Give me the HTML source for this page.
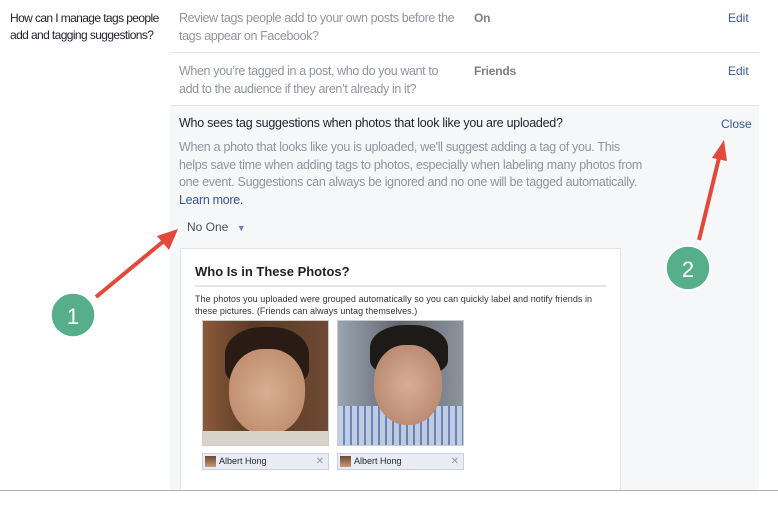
<!DOCTYPE html>
<html><head><meta charset="utf-8"><style>
*{margin:0;padding:0;box-sizing:border-box}
body{width:778px;height:510px;background:#fff;font-family:"Liberation Sans",Helvetica,Arial,sans-serif;position:relative;overflow:hidden;color:#1d2129}
.abs{position:absolute;white-space:nowrap}
.q{left:10px;top:10px;font-size:12px;line-height:17px;color:#1d2129;letter-spacing:-0.6px}
.g{color:#90949c;font-size:12.5px;line-height:18px;letter-spacing:-0.38px}
.val{color:#7f7f7f;font-weight:bold;font-size:12px;letter-spacing:-0.2px}
.lnk{color:#365899;font-size:12px}
.panel{left:170px;top:105px;width:589px;height:385px;background:#f6f7f9;border-top:1px solid #e5e5e5}
.box{left:180px;top:248px;width:441px;height:242px;background:#fff;border:1px solid #e3e3e3;border-bottom:none}
.ph{position:absolute;width:127px;height:126px;overflow:hidden;border:1px solid #ccc}
.tag{position:absolute;width:127px;height:17px;background:#e9ecf5;border:1px solid #c7cfe3;font-size:9px;line-height:15px;padding-left:16px;color:#1d2129}
.tag i{position:absolute;left:2px;top:2px;width:11px;height:11px;background:linear-gradient(#6b4a30,#c99a7a)}
.tag b{position:absolute;right:4px;top:0;color:#999;font-weight:normal;font-size:10px}
</style></head><body>
<div class="abs q">How can I manage tags people<br>add and tagging suggestions?</div>

<div class="abs g" style="top:9px;left:179px">Review tags people add to your own posts before the<br>tags appear on Facebook?</div>
<div class="abs val" style="left:474px;top:11px">On</div>
<div class="abs lnk" style="left:728px;top:11px">Edit</div>
<div class="abs" style="left:170px;top:52px;width:589px;height:1px;background:#e5e5e5"></div>
<div class="abs g" style="top:62px;left:179px">When you’re tagged in a post, who do you want to<br>add to the audience if they aren’t already in it?</div>
<div class="abs val" style="left:474px;top:64px">Friends</div>
<div class="abs lnk" style="left:728px;top:64px">Edit</div>

<div class="abs panel"></div>
<div class="abs" style="left:179px;top:116px;font-size:12.5px;color:#1d2129;letter-spacing:-0.25px">Who sees tag suggestions when photos that look like you are uploaded?</div>
<div class="abs lnk" style="left:721px;top:117px">Close</div>
<div class="abs g" style="left:179px;top:139px;line-height:17.5px;letter-spacing:-0.3px">When a photo that looks like you is uploaded, we'll suggest adding a tag of you. This<br>helps save time when adding tags to photos, especially when labeling many photos from<br>one event. Suggestions can always be ignored and no one will be tagged automatically.<br><span style="color:#365899">Learn more.</span></div>
<div class="abs" style="left:187px;top:220px;font-size:12px;color:#4b4f56">No One <span style="color:#6d84b4;font-size:9px;margin-left:5px">▼</span></div>

<div class="abs box">
 <div style="position:absolute;left:14px;top:15px;font-size:13px;font-weight:bold;color:#1d2129">Who Is in These Photos?</div>
 <div style="position:absolute;left:14px;top:36px;width:411px;height:2px;background:#e5e5e5"></div>
 <div style="position:absolute;left:14px;top:44px;font-size:9px;line-height:12px;color:#333;white-space:nowrap;letter-spacing:0.05px">The photos you uploaded were grouped automatically so you can quickly label and notify friends in<br>these pictures. (Friends can always untag themselves.)</div>
 <div class="ph" style="left:21px;top:71px;background:linear-gradient(90deg,#8a5a3a,#5a3a25 40%,#6d4a33)">
  <div style="position:absolute;left:22px;top:6px;width:84px;height:60px;border-radius:45% 45% 30% 30%;background:#2a1c14"></div>
  <div style="position:absolute;left:26px;top:28px;width:76px;height:86px;border-radius:45% 45% 48% 48%;background:radial-gradient(#d8ae92,#b98466)"></div>
  <div style="position:absolute;left:0;top:110px;width:127px;height:20px;background:#d8d2c8"></div>
 </div>
 <div class="ph" style="left:156px;top:71px;background:linear-gradient(90deg,#9aa4b0,#5f6670 50%,#8e949c)">
  <div style="position:absolute;left:0;top:85px;width:127px;height:45px;background:repeating-linear-gradient(90deg,#c6d4ec 0 5px,#6b84b8 5px 7px),#c6d4ec;opacity:.9"></div>
  <div style="position:absolute;left:32px;top:4px;width:78px;height:50px;border-radius:45% 45% 30% 30%;background:#1e1a18"></div>
  <div style="position:absolute;left:36px;top:24px;width:68px;height:80px;border-radius:45% 45% 48% 48%;background:radial-gradient(#d9ae95,#b07f66)"></div>
 </div>
 <div class="tag" style="left:21px;top:204px"><i></i> Albert Hong<b>✕</b></div>
 <div class="tag" style="left:156px;top:204px"><i></i> Albert Hong<b>✕</b></div>
</div>

<div class="abs" style="left:0;top:490px;width:778px;height:1px;background:#b0b0b0"></div>

<svg class="abs" style="left:0;top:0" width="778" height="510">
 <line x1="96" y1="297" x2="165" y2="240" stroke="#e2493b" stroke-width="4"/>
 <path d="M178,229 L157,236 L169,250 z" fill="#e2493b"/>
 <line x1="699" y1="240" x2="719" y2="158" stroke="#e2493b" stroke-width="4"/>
 <path d="M724,140 L712,158 L727,161 z" fill="#e2493b"/>
 <circle cx="73" cy="315" r="22" fill="#56ae8a" stroke="#fff" stroke-width="1.5"/>
 <circle cx="688" cy="268" r="22" fill="#56ae8a" stroke="#fff" stroke-width="1.5"/>
 <text x="73" y="324" font-family="Liberation Sans,sans-serif" font-size="22" fill="#fff" text-anchor="middle">1</text>
 <text x="688" y="277" font-family="Liberation Sans,sans-serif" font-size="22" fill="#fff" text-anchor="middle">2</text>
</svg>
</body></html>
